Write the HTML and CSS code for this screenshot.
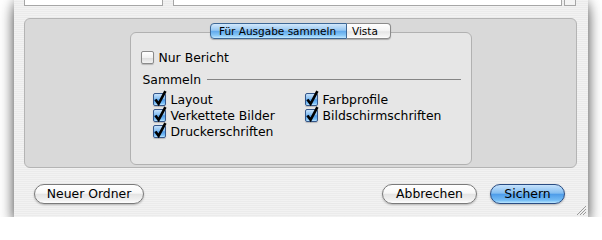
FILE: index.html
```html
<!DOCTYPE html>
<html lang="de">
<head>
<meta charset="utf-8">
<link rel="stylesheet" href="styles.css">
</head>
<body>
<div class="window">
  <div class="top-row">
    <div class="topbox topbox-left"></div>
    <div class="topbox topbox-right"></div>
    <div class="topbox topbox-scroll"></div>
  </div>
  <div class="group">
    <div class="tabs">
      <div class="tab tab-selected">Für Ausgabe sammeln</div>
      <div class="tab">Vista</div>
    </div>
    <div class="inner">
      <div class="row">
        <span class="cb"></span><span class="label">Nur Bericht</span>
      </div>
      <div class="section">
        <span class="section-title">Sammeln</span><span class="section-line"></span>
      </div>
      <div class="grid">
        <div class="row"><span class="cb cb-on"><svg class="tick" viewBox="0 0 13 13"><path d="M2.4 6.4 L5.6 10.8 L12.4 -1.8"/></svg></span><span class="label">Layout</span></div>
        <div class="row"><span class="cb cb-on"><svg class="tick" viewBox="0 0 13 13"><path d="M2.4 6.4 L5.6 10.8 L12.4 -1.8"/></svg></span><span class="label">Farbprofile</span></div>
        <div class="row"><span class="cb cb-on"><svg class="tick" viewBox="0 0 13 13"><path d="M2.4 6.4 L5.6 10.8 L12.4 -1.8"/></svg></span><span class="label">Verkettete Bilder</span></div>
        <div class="row"><span class="cb cb-on"><svg class="tick" viewBox="0 0 13 13"><path d="M2.4 6.4 L5.6 10.8 L12.4 -1.8"/></svg></span><span class="label">Bildschirmschriften</span></div>
        <div class="row"><span class="cb cb-on"><svg class="tick" viewBox="0 0 13 13"><path d="M2.4 6.4 L5.6 10.8 L12.4 -1.8"/></svg></span><span class="label">Druckerschriften</span></div>
      </div>
    </div>
  </div>
  <div class="buttons">
    <div class="btn btn-new">Neuer Ordner</div>
    <div class="spacer"></div>
    <div class="btn btn-cancel">Abbrechen</div>
    <div class="btn btn-default">Sichern</div>
  </div>
  <svg class="grip" viewBox="0 0 11 11">
    <path d="M1 10 L10 1 M4 10 L10 4 M7 10 L10 7"/>
  </svg>
</div>
</body>
</html>
```

FILE: styles.css
```css
html, body {
  margin: 0;
  padding: 0;
  background: #ffffff;
}
body {
  padding-left: 14px;
  font-family: "DejaVu Sans", sans-serif;
  font-size: 12.4px;
  color: #000;
}
.window {
  position: relative;
  width: 574px;
  height: 217px;
  box-sizing: border-box;
  background-color: #ebebeb;
  background-image: repeating-linear-gradient(0deg, rgba(255,255,255,0.35) 0 1px, rgba(0,0,0,0) 1px 2px);
  box-shadow: 0 8px 14px rgba(0,0,0,0.5), 0 0 10px rgba(0,0,0,0.35);
}
.top-row {
  display: flex;
  height: 6px;
  padding-left: 10px;
}
.topbox {
  box-sizing: border-box;
  height: 6px;
  background: #fff;
  border: 1px solid #a6a6a6;
  border-top: none;
}
.topbox-left { width: 139px; }
.topbox-right { width: 389px; margin-left: 10px; }
.topbox-scroll { width: 12px; margin-left: 2px; background: #f4f4f4; }

.group {
  box-sizing: border-box;
  margin: 12px 0 0 10px;
  width: 553px;
  height: 150px;
  border: 1px solid #b4b4b4;
  border-radius: 6px;
  background: #d9d9d9;
  display: flex;
  flex-direction: column;
  align-items: center;
}
.tabs {
  position: relative;
  z-index: 1;
  display: flex;
  margin-top: 4px;
  height: 16px;
  box-sizing: border-box;
  border-radius: 4px;
  box-shadow: 0 1px 1px rgba(0,0,0,0.25);
}
.tab {
  box-sizing: border-box;
  height: 16px;
  line-height: 14px;
  font-size: 10.5px;
  border: 1px solid #8b8b8b;
  background: linear-gradient(#ffffff, #f4f4f4 50%, #e6e6e6 55%, #f6f6f6 90%, #ffffff);
}
.tab-selected {
  width: 137px;
  padding-left: 8px;
  border-color: #3e6896;
  border-radius: 4px 0 0 4px;
  background: linear-gradient(#d2e8fb, #96c7f2 45%, #62aaec 52%, #86c6f6 80%, #c2e8ff);
}
.tab:last-child {
  width: 44px;
  padding-left: 5px;
  border-left: none;
  border-radius: 0 4px 4px 0;
}
.inner {
  box-sizing: border-box;
  width: 342px;
  height: 133px;
  margin-top: -7px;
  border: 1px solid #b1b1b1;
  border-radius: 6px;
  background-color: #e6e6e6;
  padding: 16px 10px 0 10px;
}
.row {
  display: flex;
  align-items: center;
  height: 16px;
}
.cb {
  position: relative;
  box-sizing: border-box;
  width: 13px;
  height: 13px;
  margin-right: 5px;
  border: 1px solid #8a8a8a;
  border-radius: 2px;
  background: linear-gradient(#ffffff, #f1f1f1 50%, #dcdcdc 55%, #f3f3f3);
  box-shadow: 0 1px 1px rgba(0,0,0,0.2);
}
.cb-on {
  border-color: #34568a;
  background: linear-gradient(#c6e1fb, #82bcf0 45%, #4f9be8 52%, #7cc0f7 85%, #bfe6ff);
}
.tick {
  position: absolute;
  left: -1px;
  top: -1px;
  width: 13px;
  height: 13px;
  overflow: visible;
}
.tick path {
  fill: none;
  stroke: #000;
  stroke-width: 2.6;
  stroke-linecap: butt;
  stroke-linejoin: miter;
}
.label {
  white-space: nowrap;
}
.section {
  display: flex;
  align-items: center;
  height: 16px;
  margin-top: 6px;
  padding-left: 2px;
}
.section-line {
  flex: 1;
  height: 0;
  margin: 1px 0 0 6px;
  border-top: 1px solid #858585;
}
.grid {
  display: grid;
  grid-template-columns: 152px auto;
  margin-top: 4px;
  padding-left: 12px;
}
.buttons {
  display: flex;
  margin-top: 16px;
  padding: 0 23px 0 20px;
  height: 20px;
}
.spacer { flex: 1; }
.btn {
  box-sizing: border-box;
  height: 20px;
  line-height: 18px;
  text-align: center;
  border: 1px solid #7a7a7a;
  border-radius: 10px;
  background: linear-gradient(#ffffff, #f7f7f7 45%, #e4e4e4 52%, #f2f2f2 85%, #ffffff);
  box-shadow: 0 1px 2px rgba(0,0,0,0.25);
}
.btn-new { width: 110px; }
.btn-cancel { width: 95px; margin-right: 13px; }
.btn-default {
  width: 75px;
  border-color: #2a4c82;
  background: linear-gradient(#c6e2fc, #84bef1 45%, #4f9de9 52%, #74bcf5 85%, #bde8ff);
}
.grip {
  position: absolute;
  right: 1px;
  bottom: 1px;
  width: 11px;
  height: 11px;
}
.grip path {
  stroke: #9a9a9a;
  stroke-width: 1;
  fill: none;
}
```
